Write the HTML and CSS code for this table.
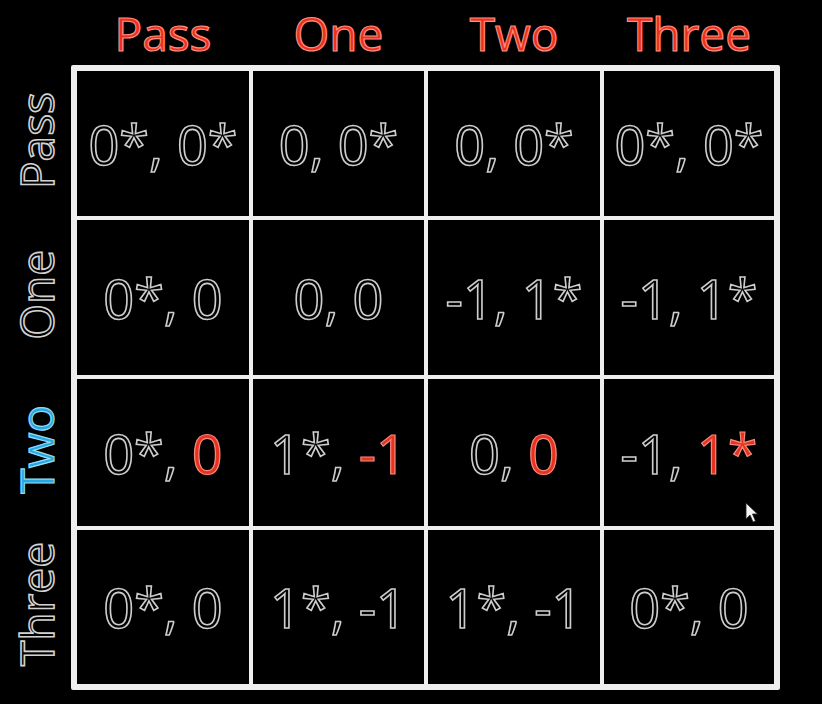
FILE: index.html
```html
<!DOCTYPE html>
<html lang="en">
<head>
<meta charset="utf-8">
<title>Payoff matrix</title>
<link rel="stylesheet" href="styles.css">
</head>
<body>
<div class="page">
  <div class="corner"></div>
  <div class="col-heads">
    <div class="head">Pass</div>
    <div class="head">One</div>
    <div class="head">Two</div>
    <div class="head">Three</div>
  </div>
  <div class="row-heads">
    <div class="rlabel"><span class="rtext">Pass</span></div>
    <div class="rlabel"><span class="rtext">One</span></div>
    <div class="rlabel"><span class="rtext blue">Two</span></div>
    <div class="rlabel"><span class="rtext">Three</span></div>
  </div>
  <div class="matrix">
    <div class="cell">0*, 0*</div>
    <div class="cell">0, 0*</div>
    <div class="cell">0, 0*</div>
    <div class="cell">0*, 0*</div>

    <div class="cell">0*, 0</div>
    <div class="cell">0, 0</div>
    <div class="cell">-1, 1*</div>
    <div class="cell">-1, 1*</div>

    <div class="cell">0*, <span class="red">0</span></div>
    <div class="cell">1*, <span class="red">-1</span></div>
    <div class="cell">0, <span class="red">0</span></div>
    <div class="cell">-1, <span class="red">1*</span>
      <svg class="cursor" width="14" height="22" viewBox="0 0 14 22" aria-hidden="true">
        <path d="M1 1 L1 17 L5 13 L8 20 L10.5 19 L7.5 12 L12.5 12 Z" fill="#f4f4f4" stroke="#222" stroke-width="0.8"/>
      </svg>
    </div>

    <div class="cell">0*, 0</div>
    <div class="cell">1*, -1</div>
    <div class="cell">1*, -1</div>
    <div class="cell">0*, 0</div>
  </div>
</div>
</body>
</html>
```

FILE: styles.css
```css
html, body {
  margin: 0;
  padding: 0;
  background: #000;
}

body {
  width: 822px;
  height: 704px;
  overflow: hidden;
  font-family: "Open Sans", "Noto Sans", sans-serif;
}

.page {
  display: grid;
  grid-template-columns: 71px 709px;
  grid-template-rows: 65px 625px;
}

.col-heads {
  display: grid;
  grid-template-columns: 172px 171px 172px 170px;
  column-gap: 4px;
  padding: 0 6px;
}

.head {
  text-align: center;
  font-size: 46px;
  line-height: 64px;
  padding-top: 1px;
  color: #ec2f1e;
  -webkit-text-stroke: 1.2px #ff8d7e;
}

.row-heads {
  display: grid;
  grid-template-rows: 145px 155px 147px 154px;
  row-gap: 4px;
  padding-top: 6px;
}

.rlabel {
  display: flex;
  align-items: center;
  justify-content: center;
  padding-bottom: 6px;
}

.rtext {
  writing-mode: vertical-rl;
  transform: rotate(180deg);
  font-size: 46px;
  line-height: 73px;
  color: #000;
  -webkit-text-stroke: 1.6px #d2d2d2;
}

.rtext.blue {
  color: #27a7e0;
  -webkit-text-stroke: 1.2px #8fd9f7;
}

.matrix {
  display: grid;
  grid-template-columns: 172px 171px 172px 170px;
  grid-template-rows: 145px 155px 147px 154px;
  gap: 4px;
  background: #eeeeee;
  border: 6px solid #eeeeee;
  border-radius: 2px;
}

.cell {
  position: relative;
  background: #000;
  display: flex;
  align-items: center;
  justify-content: center;
  white-space: pre;
  font-size: 54px;
  color: #000;
  -webkit-text-stroke: 1.6px #cdcdcd;
}

.red {
  color: #e8321f;
  -webkit-text-stroke: 1.2px #f58a7c;
}

.cursor {
  position: absolute;
  left: 141px;
  top: 123px;
}
```
